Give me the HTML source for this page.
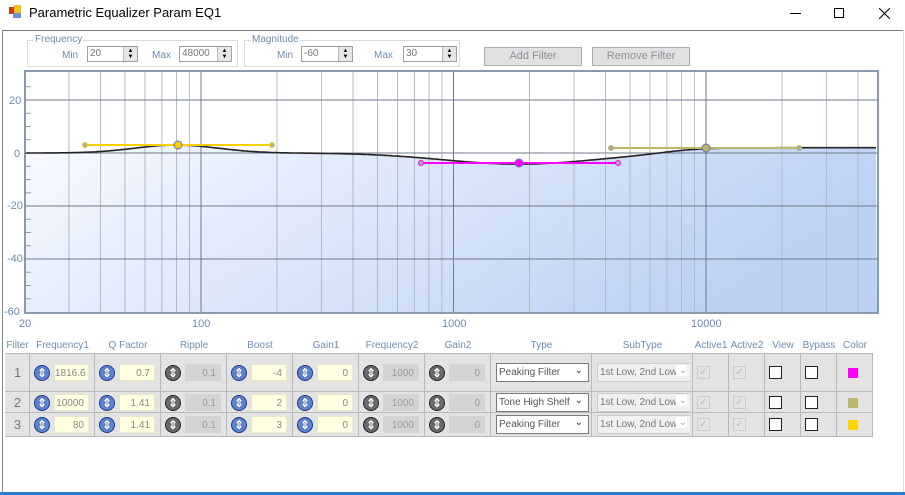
<!DOCTYPE html>
<html><head><meta charset="utf-8"><style>
*{box-sizing:border-box;margin:0;padding:0}
body{width:905px;height:495px;background:#fff;font-family:"Liberation Sans",sans-serif;position:relative;overflow:hidden;color:#000}
.a{position:absolute}
.lbl{position:absolute;font-size:10px;color:#6d8bb0}
.gb{position:absolute;border:1px solid #dcdcdc}
.gbt{position:absolute;top:-7px;left:6px;background:#fff;font-size:10px;color:#6d8bb0;padding:0 1px}
.spin{position:absolute;height:16px;border:1px solid #a0a0a0;background:#fff;font-size:10px;color:#777;padding:1px 0 0 2px}
.spin .s{position:absolute;right:0;top:0;width:14px;height:14px;background:#e6e6e6;border-left:1px solid #bbb;font-size:6px;line-height:6px;text-align:center;color:#000;padding-top:1px}
.btn{position:absolute;height:19px;background:#e1e1e1;border:1px solid #adadad;font-size:11px;color:#8a8f99;text-align:center;line-height:17px}
.hd{position:absolute;top:340px;font-size:10px;color:#6d8bb0;text-align:center}
.cell{position:absolute;background:#e3e3e3;border-right:1px solid #b9b9b9;border-bottom:1px solid #b9b9b9}
.ic{position:absolute;width:16px;height:16px;border-radius:50%;border:1px solid #203a80;background:#5b83d8;color:#fff;font-size:12px;line-height:14px;text-align:center;font-weight:bold;text-shadow:0 0 1px #000}
.ic.g{border-color:#222;background:#6b6b6b}
.val{position:absolute;height:17px;background:#ffffe1;border:1px solid #e8e8c8;font-size:10px;color:#888;text-align:right;padding:3px 4px 0 0}
.val.d{background:#d4d4d4;border-color:#d4d4d4;color:#999}
.sel{position:absolute;height:19px;background:#fff;border:1px solid #7a7a7a;font-size:10px;color:#555;padding:3px 0 0 2px}
.sel2{position:absolute;height:19px;background:#f0f0f0;border:1px solid #ccc;font-size:10px;color:#777;padding:3px 0 0 2px;border-right:none}
.cb{position:absolute;width:13px;height:13px;border:1px solid #222;background:#fff}
.cbd{position:absolute;width:13px;height:13px;border:1px solid #ccc;color:#bbb;font-size:10px;line-height:11px;text-align:center}
.sw{position:absolute;width:10px;height:10px}
</style></head><body>
<div class="a" style="left:9px;top:7px;width:7px;height:7px;background:#c83b1e"></div>
<div class="a" style="left:14px;top:5px;width:7px;height:8px;background:#f2c21c"></div>
<div class="a" style="left:13px;top:13px;width:8px;height:5px;background:#6b8fd0"></div>
<div class="a" style="left:29px;top:5px;font-size:13px;color:#000">Parametric Equalizer Param EQ1</div>
<div class="a" style="left:790px;top:13px;width:11px;height:1px;background:#000"></div>
<div class="a" style="left:834px;top:8px;width:10px;height:10px;border:1px solid #000"></div>
<svg class="a" style="left:879px;top:8px" width="11" height="11"><path d="M0,0L11,11M11,0L0,11" stroke="#000" stroke-width="1"/></svg>
<div class="a" style="left:2px;top:30px;width:902px;height:1px;background:#7a7a7a"></div>
<div class="a" style="left:2px;top:30px;width:1px;height:463px;background:#8a8a8a"></div>
<div class="a" style="left:903px;top:30px;width:1px;height:463px;background:#ddd"></div>
<div class="a" style="left:0;top:492px;width:905px;height:3px;background:#2b7bd1"></div>

<div class="gb" style="left:27px;top:40px;width:211px;height:27px"><span class="gbt">Frequency</span></div>
<div class="lbl" style="left:62px;top:50px;font-size:10px">Min</div>
<div class="spin" style="left:87px;top:46px;width:51px">20<div class="s">▲<br>▼</div></div>
<div class="lbl" style="left:152px;top:50px">Max</div>
<div class="spin" style="left:179px;top:46px;width:53px">48000<div class="s">▲<br>▼</div></div>
<div class="gb" style="left:244px;top:40px;width:216px;height:27px"><span class="gbt">Magnitude</span></div>
<div class="lbl" style="left:277px;top:50px">Min</div>
<div class="spin" style="left:301px;top:46px;width:52px">-60<div class="s">▲<br>▼</div></div>
<div class="lbl" style="left:374px;top:50px">Max</div>
<div class="spin" style="left:403px;top:46px;width:54px">30<div class="s">▲<br>▼</div></div>
<div class="btn" style="left:484px;top:47px;width:98px">Add Filter</div>
<div class="btn" style="left:592px;top:47px;width:98px">Remove Filter</div>

<svg class="a" style="left:0;top:0" width="905" height="340" id="sv">
<defs><linearGradient id="lg" x1="0" y1="0" x2="1" y2="0.3"><stop offset="0" stop-color="#f8faff"/><stop offset="1" stop-color="#bdd1f4"/></linearGradient></defs>
<rect x="25" y="71" width="853" height="242" fill="#fff" stroke="#8a9aae" stroke-width="2"/>
<g id="g"></g>
</svg>
<div class="lbl" style="left:9px;top:95px;font-size:11px">20</div>
<div class="lbl" style="left:14px;top:148px;font-size:11px">0</div>
<div class="lbl" style="left:7px;top:200px;font-size:11px">-20</div>
<div class="lbl" style="left:7px;top:253px;font-size:11px">-40</div>
<div class="lbl" style="left:4px;top:306px;font-size:11px">-60</div>
<div class="lbl" style="left:19px;top:318px;font-size:11px">20</div>
<div class="lbl" style="left:192px;top:318px;font-size:11px">100</div>
<div class="lbl" style="left:442px;top:318px;font-size:11px">1000</div>
<div class="lbl" style="left:691px;top:318px;font-size:11px">10000</div>

<div id="tbl"></div>
<script>
var ns="http://www.w3.org/2000/svg",g=document.getElementById('g');
function X(f){return 201+252.5*Math.log10(f/100)}
function Y(d){return 153-2.65*d}
function el(t,a){var e=document.createElementNS(ns,t);for(var k in a)e.setAttribute(k,a[k]);g.appendChild(e);return e}
function G(f){var d=Math.log2(f/80),a=3*Math.exp(-d*d/(2*0.55*0.55));
var d2=Math.log2(f/1816.6),b=-4.2*Math.exp(-d2*d2/(2*1.0*1.0));
var c=1+Math.tanh(2.2*Math.log2(f/7000));return a+b+c;}
var p="M26,"+Y(G(20));for(var x=26;x<=877;x+=2){var f=100*Math.pow(10,(x-201)/252.5);p+=" L"+x+","+Y(G(f)).toFixed(1)}
el('path',{d:p+" L877,312 L26,312 Z",fill:"url(#lg)"});
for(var n=1;n<5;n++)for(var k=1;k<10;k++){var f=k*Math.pow(10,n);if(f<=20||f>=48000)continue;var x=X(f);
el('line',{x1:x,x2:x,y1:72,y2:312,stroke:k==1?"#707a88":"#b4bac4","stroke-width":1})}
[20,0,-20,-40].forEach(function(d){el('line',{x1:26,x2:877,y1:Y(d),y2:Y(d),stroke:"#707a88"})});
for(var d=25;d>-60;d-=5){if(d%20)el('line',{x1:26,x2:31,y1:Y(d),y2:Y(d),stroke:"#999"})}
el('path',{d:p,fill:"none",stroke:"#222","stroke-width":1.6});
function h(x1,x2,xc,y,c){el('line',{x1:x1,x2:x2,y1:y,y2:y,stroke:c,"stroke-width":2});
el('circle',{cx:x1,cy:y,r:2.5,fill:"#aaa",stroke:c});el('circle',{cx:x2,cy:y,r:2.5,fill:"#aaa",stroke:c});
el('circle',{cx:xc,cy:y,r:4,fill:c,stroke:"#6670c0"})}
h(85,272,178,145,"#f5cf00");h(421,618,519,163,"#ff00ff");h(611,799,706,148,"#bdb76b");
var cols=[5,30,95,161,227,293,359,425,491,592,693,729,765,801,837,873];
var heads=["Filter","Frequency1","Q Factor","Ripple","Boost","Gain1","Frequency2","Gain2","Type","SubType","Active1","Active2","View","Bypass","Color"];
var rows=[[354,392],[392,413],[413,437]];
var data=[["1816.6","0.7","0.1","-4","0","1000","0","Peaking Filter","#ff00ff"],["10000","1.41","0.1","2","0","1000","0","Tone High Shelf","#bdb76b"],["80","1.41","0.1","3","0","1000","0","Peaking Filter","#ffd700"]];
var H="";
for(var i=0;i<15;i++)H+='<div class="hd" style="left:'+cols[i]+'px;width:'+(cols[i+1]-cols[i])+'px">'+heads[i]+'</div>';
H+='<div class="a" style="left:5px;top:353px;width:868px;height:1px;background:#b9b9b9"></div><div class="a" style="left:5px;top:353px;width:1px;height:84px;background:#b9b9b9"></div>';
rows.forEach(function(r,ri){var t=r[0],hh=r[1]-r[0],cy=t+hh/2,D=data[ri];
for(var c=0;c<15;c++){H+='<div class="cell" style="left:'+cols[c]+'px;top:'+t+'px;width:'+(cols[c+1]-cols[c])+'px;height:'+hh+'px"></div>'}
H+='<div class="a" style="left:5px;width:25px;text-align:center;top:'+(cy-8)+'px;font-size:13px;color:#777">'+(ri+1)+'</div>';
for(var c=1;c<8;c++){var gr=(c==3||c==6||c==7);
H+='<div class="ic'+(gr?' g':'')+'" style="left:'+(cols[c]+4)+'px;top:'+(cy-8)+'px">⇕</div>';
H+='<div class="val'+(gr?' d':'')+'" style="left:'+(cols[c]+24)+'px;top:'+(cy-9)+'px;width:'+(cols[c+1]-cols[c]-30)+'px">'+D[c-1]+'</div>'}
H+='<div class="sel" style="left:496px;top:'+(cy-10)+'px;width:93px">'+D[7]+'<span style="position:absolute;right:5px;top:1px;color:#333">&#8964;</span></div>';
H+='<div class="sel2" style="left:597px;top:'+(cy-10)+'px;width:93px;white-space:nowrap;overflow:hidden">1st Low, 2nd Low<span style="position:absolute;right:3px;top:1px;background:#fff;color:#aaa;padding-left:3px">&#8964;</span></div>';
H+='<div class="cbd" style="left:697px;top:'+(cy-7)+'px">✓</div><div class="cbd" style="left:733px;top:'+(cy-7)+'px">✓</div>';
H+='<div class="cb" style="left:769px;top:'+(cy-7)+'px"></div><div class="cb" style="left:805px;top:'+(cy-7)+'px"></div>';
H+='<div class="sw" style="left:848px;top:'+(cy-5)+'px;background:'+D[8]+'"></div>';});
document.getElementById('tbl').innerHTML=H;
</script>
</body></html>
